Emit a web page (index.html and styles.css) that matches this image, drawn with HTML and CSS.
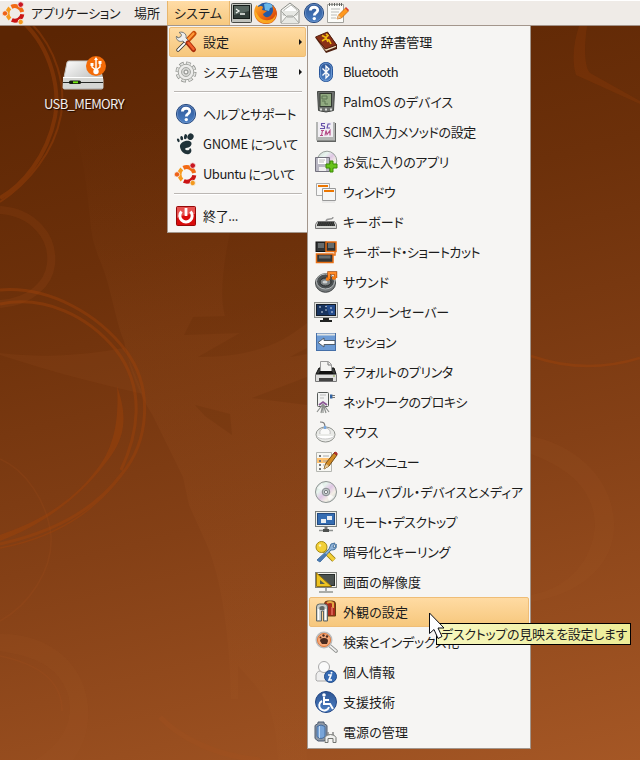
FILE: index.html
```
<!DOCTYPE html>
<html lang="ja">
<head>
<meta charset="utf-8">
<title>デスクトップ</title>
<link rel="stylesheet" href="styles.css">
</head>
<body>
<svg class="sprite" aria-hidden="true">
  <defs>
    <linearGradient id="blue" x2="0" y2="1"><stop stop-color="#2d5594"/><stop offset="1" stop-color="#4c80c4"/></linearGradient>
    <linearGradient id="metal" x2="1" y2="1"><stop stop-color="#fff"/><stop offset="1" stop-color="#a9aaa8"/></linearGradient>
    <linearGradient id="disc" x2="1" y2="1"><stop stop-color="#c9cfcf"/><stop offset=".3" stop-color="#e8f5ee"/><stop offset=".5" stop-color="#dfc7e4"/><stop offset=".7" stop-color="#f4efe6"/><stop offset="1" stop-color="#b7c3c7"/></linearGradient>
    <linearGradient id="fox" x2="1" y2="1"><stop stop-color="#ffb02b"/><stop offset=".5" stop-color="#ed6a11"/><stop offset="1" stop-color="#c92b08"/></linearGradient>
    <linearGradient id="stem" x2="0" y2="1"><stop stop-color="#a65a26" stop-opacity="0"/><stop offset=".35" stop-color="#a65a26"/></linearGradient>
    <symbol id="ubuntu" viewBox="0 0 24 24">
      <g fill="none" stroke-width="4">
        <path stroke="#f26a14" d="M9.4 5.900A7.600 7.600 0 0 1 20.200 11"/>
        <path stroke="#cb1414" d="M20.300 13.200A7.600 7.600 0 0 1 9.800 19"/>
        <path stroke="#f79a1c" d="M8 18A7.600 7.600 0 0 1 7.800 6.900"/>
      </g>
      <g stroke="#f5f2ef" stroke-width=".8"><circle cx="3" cy="12.400" r="2.700" fill="#ee6218"/><circle cx="18.700" cy="3.600" r="2.800" fill="#c91622"/><circle cx="18.700" cy="21" r="2.700" fill="#f39a1e"/></g>
    </symbol>
    <symbol id="help" viewBox="0 0 24 24">
      <circle cx="12" cy="12" r="9.600" fill="url(#blue)" stroke="#26497f"/>
      <circle cx="12" cy="12" r="8.700" fill="none" stroke="#7c9fd2" stroke-width=".6"/>
      <path d="M8.400 9.500c0-4.400 7.300-4.200 7.300-.3 0 2.900-3.400 2.500-3.400 5.300" fill="none" stroke="#fff" stroke-width="2.800"/><circle cx="12.300" cy="17.600" r="1.700" fill="#fff"/>
    </symbol>
  </defs>
</svg>

<main class="desktop">
  <svg class="wallpaper" viewBox="0 0 640 760" aria-hidden="true">
    <path fill="url(#stem)" opacity=".13" d="M69 118C88 160 87 205 93 240L98 256C110 280 115 320 124 341C130 372 140 395 153 416L183 477L189 505L207 545C222 580 230 640 231 699H238V666C262 692 276 704 278 760H307V545L245 563C265 600 275 643 307 644V120Z"/>
    <g fill="#a65a26" opacity=".12">
      <path d="M0 353C50 359 88 354 124 348L143 394C90 382 50 371 0 355Z"/>
      <path d="M0 634C50 633 84 665 88 705C90 730 82 748 73 760H35C60 745 75 725 68 694C58 666 36 657 0 651Z"/>
      <path d="M531 436C578 446 612 480 614 522C616 565 580 594 531 602V595C571 587 592 560 595 526C594 483 561 466 531 454Z"/>
    </g>
    <g fill="#542300" opacity=".14">
      <path d="M230 233C222 270 220 300 225 316L193 317L184 335L240 333L198 357C250 357 280 345 307 323V233Z"/>
      <path d="M195 405L230 414L232 435L205 416ZM307 348L290 357L307 354ZM307 377L252 398L307 405Z"/>
    </g>
    <g fill="none" stroke="#b2551f" opacity=".14">
      <path d="M0 210C32 212 54 236 51 264C49 284 30 302 0 304" stroke-width="8"/>
      <path d="M0 459C25 470 47 500 51 536C53 570 29 605 0 621M0 656C38 664 62 680 62 711" stroke-width="1.500"/>
      <path d="M160 717C180 738 216 756 260 760" stroke-width="5"/>
    </g>
    <g fill="none" stroke="#a34309" opacity=".4">
      <path d="M24 23C52 50 60 90 55 117C47 157 22 186 0 198" stroke-width="4"/>
      <path d="M31 23C57 50 66 85 61 115C54 153 28 183 0 202" stroke-width="2"/>
      <path d="M0 304C45 295 88 316 116 350C147 390 137 436 121 470M0 290C50 286 99 315 126 351C153 387 150 441 121 475C91 515 45 534 0 544" stroke-width="3"/>
      <path d="M0 548C64 536 106 503 130 462" stroke-width="1.400"/>
      <path d="M531 356Q585 375 640 358" stroke-width="2.500"/>
    </g>
    <g fill="#a34309" opacity=".42">
      <path d="M117 386C128 418 126 439 104 465C77 500 40 526 0 541V535C44 520 77 498 100 465C116 443 119 413 117 386Z"/>
      <path d="M579 26C573 45 572 62 576 75L640 104V101L590 73C584 66 584 46 587 26Z" opacity=".5"/>
    </g>
  </svg>

  <header class="panel">
    <nav class="menubar">
      <div class="menubar-item applications"><svg class="logo"><use href="#ubuntu"/></svg><span class="label" data-width="89">アプリケーション</span></div>
      <div class="menubar-item"><span class="label" data-width="26">場所</span></div>
      <div class="menubar-item open"><span class="label" data-width="48">システム</span></div>
    </nav>
    <div class="launchers">
      <svg viewBox="0 0 24 24"><rect x="1.500" y="2.500" width="20" height="19" rx="1" fill="#bfc1bc" stroke="#464845"/><rect x="3.500" y="4.500" width="16" height="13" fill="#303b38" stroke="#151b19"/><path d="M4 5h15v5L4 14z" fill="#56645f"/><path d="m6 8 3 2-3 2M10 13h5" fill="none" stroke="#f4f7f4" stroke-width="1.300"/></svg>
      <svg viewBox="0 0 24 24"><circle cx="12" cy="12" r="10.500" fill="#245aa5"/><path d="M10 3c4-2 8 0 9 3l-3 1-1 3-4-1z" fill="#68b7e9"/><path d="M2.500 4 4.500 6Q7 4 9 6L8 9l5 1-4 3c1 4 6 4 8 1 3-3 2-7 1-10 9 6 5 19-6 19C2 23-3 12 2.500 4Z" fill="url(#fox)"/><path d="M1.300 10C0 17 6 23 13 22.500c6 0 9-5 9-9.500-2 5-6 7-11 6-4 0-7-4-9.700-9Z" fill="#ffbd26" opacity=".8"/></svg>
      <svg viewBox="0 0 24 24"><path d="m3 9 9-7 9 7v13H3Z" fill="#f6f6f3" stroke="#8c8e89"/><path d="m6 9 7-5 6 5v5H5Z" fill="#fff" stroke="#b8b9b5"/><path d="m3 10 6 6h6l6-6M3 22l6-7h6l6 7" fill="#e7e8e4" stroke="#a6a8a3"/></svg>
      <svg viewBox="0 0 24 24"><use href="#help"/></svg>
      <svg viewBox="0 0 24 24"><path d="M1.500 3.500h16v18h-16Z" fill="#fcfcf9" stroke="#a3a39e"/><path d="M3.500 2v3M6 2v3M8.500 2v3m2.500-3v3M13.500 2v3m2-3v3" stroke="#60625e"/><path d="M5 8h9M5 11h8M5 14h6m-6 3h5" stroke="#bbbcb8"/><path d="m11 18 1.500-4 7-7 3 3-7 7Z" fill="#ff981e" stroke="#c4610a" stroke-width=".7"/><path d="m19 7 1-1 3 3-1 1Z" fill="#d8372f"/><path d="m11 18 1.500-4 2.500 2.500Z" fill="#e9c494"/></svg>
    </div>
  </header>

  <section class="drive">
    <svg viewBox="0 0 46 40"><path d="M3.500 25 7 7.500q.4-1.500 2-1.500h28q1.500 0 2 1.500L43 25v7.500q0 1.500-1.500 1.500h-37Q3 34 3 32.500Z" fill="url(#metal)" stroke="#c6c5c2"/><path d="M3 23h40v10H3Z" fill="#d6d7d4"/><path d="M3 22.500h40" stroke="#fff"/><path d="M3 27.500h40" stroke="#272a27"/><rect x="9" y="25.500" width="12" height="3.500" rx="1.500" fill="#151b10"/><path d="M13 27.300h5" stroke="#75eb16" stroke-width="1.800"/><circle cx="36" cy="11" r="10" fill="#f36b08"/><g fill="none" stroke="#fff" stroke-width="1.400"><path d="M36 4v12M32 9v3l4 3 4-3V8"/></g><path d="m36 2-2 3h4ZM30.500 8h3v3h-3ZM38.500 6h3v3h-3Z" fill="#fff"/><circle cx="36" cy="16.500" r="2.700" fill="#fff"/></svg>
    <span class="label" data-width="80">USB_MEMORY</span>
  </section>

  <nav class="menu system-menu">
    <div class="item selected"><svg viewBox="0 0 24 24"><path d="m4 20 9-9" stroke="#333" stroke-width="3.500" stroke-linecap="round"/><path d="m4 20 9-9" stroke="#fff" stroke-width="1.800" stroke-linecap="round"/><path d="m13 11 7-7.500" stroke="#c94d07" stroke-width="5" stroke-linecap="round"/><path d="m13.500 10 6-6.500" stroke="#ff9a38" stroke-width="2.200" stroke-linecap="round"/><path d="M5 2.500c2 1 3 2 2 4L4 8 2.500 6c-1 4 3 6.500 6.500 5l4 4 3-3-4-4c1-4-3-7-7-5.500Z" fill="#eee" stroke="#747672"/><path d="m14 13 5.500 6.500" stroke="#a92d0b" stroke-width="5" stroke-linecap="round"/><path d="m14.500 13 5 6" stroke="#f2602a" stroke-width="2.500" stroke-linecap="round"/></svg><span class="label" data-width="26">設定</span><i class="arrow"></i></div>
    <div class="item"><svg viewBox="0 0 24 24"><circle cx="12" cy="12" r="9" fill="none" stroke="#8d8f8b" stroke-width="3" stroke-dasharray="4.500 2.570"/><circle cx="12" cy="12" r="7.800" fill="#ececea" stroke="#a0a29d"/><circle cx="12" cy="12" r="8.900" fill="none" stroke="#e2e3e0" stroke-width="1.800" stroke-dasharray="3.300 3.700" stroke-dashoffset="-.600"/><circle cx="12" cy="12" r="4.500" fill="#d5d6d3" stroke="#a7a9a5"/><circle cx="12" cy="12" r="2" fill="#f6f5f3" stroke="#868885"/></svg><span class="label" data-width="75">システム管理</span><i class="arrow"></i></div>
    <hr>
    <div class="item"><svg viewBox="0 0 24 24"><use href="#help"/></svg><span class="label" data-width="93">ヘルプとサポート</span></div>
    <div class="item"><svg viewBox="0 0 24 24"><g fill="#203238"><ellipse cx="16.500" cy="4.700" rx="3" ry="3.300" transform="rotate(35 16.500 4.700)"/><ellipse cx="11.500" cy="4.700" rx="1.500" ry="2.600" transform="rotate(12 11.500 4.700)"/><ellipse cx="7.700" cy="6.100" rx="1.400" ry="2.200" transform="rotate(-12 7.700 6.100)"/><ellipse cx="4.300" cy="8.300" rx="1.200" ry="1.900" transform="rotate(-25 4.300 8.300)"/><path d="M17 10c-3-3-12 0-11 5 1 5 5 8 9 7 3-1 3-5 1-6l-1 2c-3 1-5-1-3-2 3 0 7-3 5-6Z"/></g></svg><span class="label" data-width="95">GNOME について</span></div>
    <div class="item"><svg viewBox="0 0 24 24"><use href="#ubuntu"/></svg><span class="label" data-width="92">Ubuntu について</span></div>
    <hr>
    <div class="item"><svg viewBox="0 0 24 24"><rect x="2.500" y="2.500" width="19" height="19" rx="1" fill="#d90c0c" stroke="#950909"/><path d="M3 3h18v7Q10 10 3 14Z" fill="#f28380" opacity=".6"/><path d="M7.500 7.500a6.200 6.200 0 1 0 9 0" fill="none" stroke="#fff" stroke-width="3"/><path d="M12 4v8" stroke="#fff" stroke-width="2.800"/></svg><span class="label" data-width="35">終了...</span></div>
  </nav>

  <nav class="menu preferences-menu">
    <div class="item"><svg viewBox="0 0 24 24"><path d="m1.500 8 12-6L23 15v4l-11 4Z" fill="#4d200f"/><path d="m3 11 9 10 10-4v-2l-11 4Z" fill="#f1dfbf"/><path d="m1.500 7 12-5 9 13-11 4Z" fill="#8a3017" stroke="#54200f"/><path d="m8 5.500 4 2 2-2-2-1.500m0 4 2 4m-6-1 3-2 4 1 2 4" fill="none" stroke="#f1bd15" stroke-width="1.600"/></svg><span class="label" data-width="89">Anthy 辞書管理</span></div>
    <div class="item"><svg viewBox="0 0 24 24"><rect x="5.500" y="2.500" width="13" height="19" rx="6" fill="url(#blue)" stroke="#28569b"/><rect x="6.500" y="3.500" width="11" height="17" rx="5" fill="none" stroke="#7cabe1" stroke-width=".7"/><path d="m8.500 8.500 6.500 6.500-3 3V6l3 3-6.500 6.500" fill="none" stroke="#fff" stroke-width="1.300"/></svg><span class="label" data-width="55">Bluetooth</span></div>
    <div class="item"><svg viewBox="0 0 24 24"><path d="M3.500 1.500h17l-1 19q-7.500 3-15 0Z" fill="#6f726f" stroke="#444744"/><rect x="6" y="3.500" width="11.500" height="13" fill="#91aa80" stroke="#343a32"/><path d="M8 6h5v3H8zm0 5h3v3h3" fill="none" stroke="#5d7553"/><path d="M6 19.500h2m3 0h2m3 0h2" stroke="#d6d8d5" stroke-width="2"/></svg><span class="label" data-width="110">PalmOS のデバイス</span></div>
    <div class="item"><svg viewBox="0 0 24 24"><rect x="3" y="3" width="19" height="19" fill="#626462"/><rect x="2" y="2" width="19" height="18.500" fill="#b4b6b4"/><rect x="4" y="2" width="15" height="15" fill="#f1eff4"/><g fill="none" stroke-width="1.100"><path stroke="#6651a9" d="M11 3.500H7.500v2l3 1v2H6M16.500 4H14l-1 4h3"/><path stroke="#b54884" d="M7 10.500h3m-1.500 0-1 5m-1.500 0h3m2 0 1-5 1 4 3-4v5"/></g></svg><span class="label" data-width="133">SCIM入力メソッドの設定</span></div>
    <div class="item"><svg viewBox="0 0 24 24"><circle cx="13" cy="11" r="9.800" fill="url(#disc)" stroke="#9aa29d"/><path d="M1.500 7.500h14v14h-14Z" fill="#b9b7c3" stroke="#72707c"/><path d="M4 8h8v6H4Z" fill="#fff"/><path d="M5 10h6m-6 2h5" stroke="#bbb"/><path d="M5 17h7v4H5Z" fill="#eee"/><path d="M12 14h4v-3h3v3h4v4h-4v4h-3v-4h-4Z" fill="#67c319" stroke="#3c8b06"/></svg><span class="label" data-width="106">お気に入りのアプリ</span></div>
    <div class="item"><svg viewBox="0 0 24 24"><path d="M2.500 3.500h13v12h-13Z" fill="#f7f7f6" stroke="#aaa"/><path d="M4 6h10" stroke="#ec7600" stroke-width="2"/><path d="M8.500 8.500h13v12h-13Z" fill="#f5f5f4" stroke="#999"/><path d="M10 11h10" stroke="#ec7600" stroke-width="2"/><path d="M8 22h13" stroke="#ddd"/></svg><span class="label" data-width="52">ウィンドウ</span></div>
    <div class="item"><svg viewBox="0 0 24 24"><path d="M12 11c1-4 7 0 7-4" fill="none" stroke="#999" stroke-width="1.300"/><path d="M3.500 11.500h17l2 3v4h-21v-4Z" fill="#d4d5d2" stroke="#777"/><path d="M4 12h16l1 4H3Z" fill="#4e504e"/><path d="M4 13h16M3 15h18" stroke="#111" stroke-dasharray="1.500 .6"/></svg><span class="label" data-width="61">キーボード</span></div>
    <div class="item"><svg viewBox="0 0 24 24"><rect x="2" y="2" width="10" height="9.500" fill="#303334" stroke="#111"/><rect x="12" y="2" width="10" height="9.500" fill="#303334" stroke="#e76e13" stroke-width="1.500"/><rect x="2.500" y="14" width="16.500" height="8.500" fill="#343738" stroke="#e76e13" stroke-width="1.500"/><path d="M4 3h6v5H4Zm10 0h6v5h-6ZM5 15.500h11.500v3H5Z" fill="#666b6c"/><path d="M21 12v3h-2" fill="none" stroke="#e76e13" stroke-width="1.500"/></svg><span class="label" data-width="137">キーボード・ショートカット</span></div>
    <div class="item"><svg viewBox="0 0 24 24"><ellipse cx="11.500" cy="13" rx="10" ry="9.300" fill="#767a7b" stroke="#424647"/><ellipse cx="11.500" cy="11.500" rx="9" ry="7.500" fill="#4b5052" stroke="#b7bbbc"/><ellipse cx="11.500" cy="12" rx="5.500" ry="4" fill="#7c8182" stroke="#252829"/><ellipse cx="11" cy="12" rx="2.500" ry="1.500" fill="#ccd0d0"/><path d="M15 9V3h6.500v5" fill="none" stroke="#a74705" stroke-width="3.400"/><path d="M15 9V3h6.500v5" fill="none" stroke="#ff8a27" stroke-width="2"/><path d="M12 9h3.500m2.500-1h4" stroke="#f57910" stroke-width="3"/></svg><span class="label" data-width="46">サウンド</span></div>
    <div class="item"><svg viewBox="0 0 24 24"><rect x=".500" y="2.500" width="23" height="15" fill="#e1e2e0" stroke="#8d8f8c"/><rect x="2.500" y="4.500" width="19" height="11" fill="#18345f" stroke="#151d28"/><path d="M12 5h9v10h-6Z" fill="#234b8c"/><g fill="#eef6ff"><circle cx="6" cy="7" r=".8"/><circle cx="12" cy="6.500" r=".7"/><circle cx="17" cy="8" r=".8"/><circle cx="8" cy="12" r=".8"/><circle cx="12" cy="10" r=".7"/><circle cx="18" cy="12" r=".8"/></g><path d="M9 18h6v2h3v2H6v-2h3Z" fill="#202221"/></svg><span class="label" data-width="106">スクリーンセーバー</span></div>
    <div class="item"><svg viewBox="0 0 24 24"><rect x="2.500" y="3.500" width="19" height="17" fill="#6d9bd4" stroke="#456fa8"/><path d="M3 4.500h18" stroke="#dde2e5" stroke-width="2"/><path d="m4 12.500 6-4.500v2.500h11v4H10V17Z" fill="#fff" stroke="#525d69"/></svg><span class="label" data-width="53">セッション</span></div>
    <div class="item"><svg viewBox="0 0 24 24"><path d="M5 8h15l2 6H2Z" fill="#3b3d3c" stroke="#111"/><path d="M6.500 13V1.500h8l3 3V13" fill="#f4f4f2" stroke="#999"/><path d="M14 2v3h3" fill="none" stroke="#777"/><path d="M6 11h12l2 4H4Z" fill="#111"/><path d="M1.500 14.500h21v7h-21Z" fill="#dddddc" stroke="#777"/><path d="M5 18h14v3H5Z" fill="#444"/><path d="M19 16h2" stroke="#8ca84c"/></svg><span class="label" data-width="110">デフォルトのプリンタ</span></div>
    <div class="item"><svg viewBox="0 0 24 24"><rect x="3.500" y="2.500" width="11" height="14" rx="1" fill="#f1f2f1" stroke="#555a57"/><path d="M6 5h6m-6 3h4" stroke="#bbb"/><path d="M16 4.500h2.500v4H16Z" fill="#3264a2"/><path d="M18 5.500h3m-3 2h3" stroke="#777"/><path d="M9 14 3 22m6-8-2 9m2-9v9m0-9 6 8m-6-8 3 9" fill="none" stroke="#8e918e" stroke-width="1.200"/><path d="m5 15 4-3 4 3" fill="none" stroke="#8b5995" stroke-width="1.800"/></svg><span class="label" data-width="124">ネットワークのプロキシ</span></div>
    <div class="item"><svg viewBox="0 0 24 24"><path d="M6 2c4 0 5 1 5 6" fill="none" stroke="#777" stroke-width="1.200"/><ellipse cx="11.500" cy="14.500" rx="9.500" ry="7.500" fill="#e9eae7" stroke="#90938e"/><path d="M2.500 16c3 4 14 4 18 0" fill="#fff" stroke="#ccc"/><path d="M6 14c-1-4 2-6 5-6s6 2 5 6" fill="#fafaf9" stroke="#bbb"/><path d="M11 6v3" stroke="#78a8df" stroke-width="2.500"/></svg><span class="label" data-width="36">マウス</span></div>
    <div class="item"><svg viewBox="0 0 24 24"><path d="M2.500 2.500h15v19h-15Z" fill="#f7f7f3" stroke="#b4b6b1"/><path d="M3 8h14v5H3Z" fill="#ffc270"/><path d="M5 6h2m-2 5h2m-2 4h2m-2 4h2" stroke="#777" stroke-width="2"/><path d="M9 6h6m-6 5h6m-6 4h3" stroke="#aaa"/><path d="m10 19 2-6 8-10 3 2-8 11Z" fill="#d28b25" stroke="#714b15"/><path d="m20 3 1-1 2 1v2Z" fill="#cb3b37" stroke="#a12925"/><path d="m10 19 2-5 3 2Z" fill="#e8ca98"/></svg><span class="label" data-width="76">メインメニュー</span></div>
    <div class="item"><svg viewBox="0 0 24 24"><circle cx="12" cy="12" r="10.500" fill="url(#disc)" stroke="#8e9593"/><path d="M12 12 3 8l5-5Z" fill="#fff" opacity=".6"/><path d="m12 12 8 5-5 4Z" fill="#fff" opacity=".7"/><circle cx="12" cy="12" r="3.800" fill="#bec4c6" stroke="#858b8d"/><circle cx="12" cy="12" r="1.600" fill="#fff" stroke="#767b7e"/></svg><span class="label" data-width="180">リムーバブル・デバイスとメディア</span></div>
    <div class="item"><svg viewBox="0 0 24 24"><rect x="1.500" y="1.500" width="21" height="15" fill="#eeefea" stroke="#7b807f"/><rect x="3.500" y="3.500" width="17" height="11" fill="#356db2" stroke="#234a80"/><path d="M7 9h5v4H7ZM13 6h5v4h-5Z" fill="#e7edf3"/><path d="M12 17v4" stroke="#777" stroke-width="3"/><path d="M5 20.500h14" stroke="#8d908e" stroke-width="1.500"/><path d="M9 20.500h6" stroke="#4d504e" stroke-width="3"/></svg><span class="label" data-width="114">リモート・デスクトップ</span></div>
    <div class="item"><svg viewBox="0 0 24 24"><path d="m7 7 13 13" stroke="#967d10" stroke-width="5"/><path d="m7 7 13 13" stroke="#f4cf36" stroke-width="3.400"/><circle cx="7.500" cy="7" r="5.500" fill="#f2cf36" stroke="#a48914"/><circle cx="6" cy="5.500" r="1.200" fill="#fff6b4"/><path d="m3 20 12-11 2-5 4-1-2 4 2 1 1-4c1 4 0 6-5 6L6 22Z" fill="#8fb2d8" stroke="#47749f"/><path d="m3 20 8-7 2 2-7 7Z" fill="#4c7bb2"/></svg><span class="label" data-width="107">暗号化とキーリング</span></div>
    <div class="item"><svg viewBox="0 0 24 24"><rect x="1.500" y="2.500" width="21" height="15" fill="#f1f1ed" stroke="#80827e"/><rect x="3.500" y="4.500" width="17" height="11" fill="#4b5250" stroke="#282d2a"/><path d="M2.500 3v13.500h15Z" fill="#edc322" stroke="#967510"/><path d="M6 10v4h5Z" fill="#58614f"/><path d="M12 18v3m-7 1h14" stroke="#aaaca8" stroke-width="2"/></svg><span class="label" data-width="78">画面の解像度</span></div>
    <div class="item selected"><svg viewBox="0 0 24 24"><path d="M10.500 4q0-3 3-3h5q3 0 3 3v12h-9Z" fill="#a92b1d" stroke="#63410e"/><path d="M13 3q3-2 6 0v5" fill="none" stroke="#e2a944" stroke-width="2"/><path d="M18 7v8" stroke="#e46f5e" stroke-width="1.500"/><path d="M2.500 7q0-3 3-3h5q3 0 3 3v14h-4v-10h-2v10h-5Z" fill="#c7ccca" stroke="#5e6562"/><path d="M5.500 7q3-2 5 0v3h-5Z" fill="#606765"/><path d="M4.500 9v11m7-11v11" stroke="#fff" stroke-width="1.500"/></svg><span class="label" data-width="65">外観の設定</span></div>
    <div class="item"><svg viewBox="0 0 24 24"><path d="m15 15 7 6" stroke="#858783" stroke-width="3.500" stroke-linecap="round"/><path d="m15 15 7 6" stroke="#eee" stroke-width="1.800" stroke-linecap="round"/><circle cx="10" cy="10" r="7.500" fill="#f8ac7c" stroke="#bbb" stroke-width="2"/><circle cx="10" cy="10" r="6.500" fill="none" stroke="#e57736"/><path d="M6 11q0-3 4-3t4 3l-1 3H8Z" fill="#4b2b20"/><g fill="#4b2b20"><circle cx="6.500" cy="7.500" r="1"/><circle cx="9.500" cy="5.500" r="1.200"/><circle cx="13" cy="6.500" r="1.200"/></g></svg><span class="label" data-width="116">検索とインデックス化</span></div>
    <div class="item"><svg viewBox="0 0 24 24"><path d="M2 20v-5q1-5 7-4h4q5 0 5 5v5H3Z" fill="#eee" stroke="#aaa"/><circle cx="10" cy="7" r="5.500" fill="#fafafa" stroke="#aaa"/><circle cx="16.500" cy="16.500" r="6" fill="#366bb4" stroke="#214b89"/><path d="M14 15h3l-2 5h3" fill="none" stroke="#fff" stroke-width="1.700"/><circle cx="17.500" cy="12.800" r="1" fill="#fff"/></svg><span class="label" data-width="52">個人情報</span></div>
    <div class="item"><svg viewBox="0 0 24 24"><circle cx="12" cy="12" r="10.500" fill="url(#blue)" stroke="#244784"/><circle cx="10" cy="5" r="1.800" fill="#fff"/><path d="M10 7v7h6l3 5M10 10h5M8 11a5 5 0 1 0 7 6" fill="none" stroke="#fff" stroke-width="2"/></svg><span class="label" data-width="52">支援技術</span></div>
    <div class="item"><svg viewBox="0 0 24 24"><path d="M4 3.500V2h6v1.500l3 2v13l-3 2.500H4l-3-2.500v-13Z" fill="#8f98a4" stroke="#4c5b70"/><path d="M3 6.500q4-3 8 0v10q-4 4-8 0Z" fill="#78a4d8" stroke="#456c9f"/><path d="M5.500 6v12" stroke="#c2d8f0"/><path d="M14 15v-3m5 3v-3" stroke="#888" stroke-width="1.500"/><path d="M11 22.500v-5q1-3 5.500-3t5.500 3v5h-3v-4h-5v4Z" fill="#f0f0ee" stroke="#737571"/></svg><span class="label" data-width="65">電源の管理</span></div>
  </nav>
  <div class="tooltip"><span class="label" data-width="186">デスクトップの見映えを設定します</span></div>
  <svg class="cursor" viewBox="0 0 18 28"><path d="M.500 1v20.500l4.500-4 4 9 4-2-4-8.500h6Z" fill="#fff" stroke="#0b0e15" stroke-linejoin="round"/></svg>
</main>
<script src="labels.js"></script>
</body>
</html>
```
FILE: styles.css
```
* { box-sizing: border-box; }
body { margin: 0; font: 13px/20px "Noto Sans CJK JP", "Noto Sans", sans-serif; color: #1c1c1c; }
svg { display: block; flex: none; }
.sprite { position: absolute; width: 0; height: 0; }
.desktop { position: relative; width: 640px; height: 760px; overflow: hidden; background: linear-gradient(166deg, #5b2503 5%, #6c300a 32%, #844016 63%, #a55725 100%); }
.wallpaper { position: absolute; inset: 0; width: 640px; height: 760px; }
.label { white-space: nowrap; font-feature-settings: "palt"; }
.panel { position: relative; height: 26px; display: flex; background: #efebe7; border-top: 1px solid #fff; border-bottom: 1px solid #a49389; }
.menubar { display: flex; }
.menubar-item { display: flex; align-items: center; padding: 0 7px; }
.applications { width: 127px; padding-left: 2px; gap: 5px; }
.logo { width: 24px; height: 24px; }
.open { width: 63px; background: linear-gradient(#ffdca6, #f7c980); border: solid #e8b66c; border-width: 0 1px; padding: 0 6px; }
.launchers { display: flex; align-items: center; }
.launchers svg { width: 24px; height: 24px; }
.drive { position: absolute; top: 55px; left: 34px; width: 100px; display: flex; flex-direction: column; align-items: center; color: #f1eeec; text-shadow: 1px 1px 1px #160800; }
.drive svg { width: 46px; height: 40px; margin: 0 2px 0 0; }
.drive .label { margin-top: -1px; }
.menu { position: absolute; top: 25px; background: #f6f5f3; border: 1px solid #a3968c; padding: 1px; }
.system-menu { left: 167px; width: 141px; }
.preferences-menu { left: 307px; width: 224px; }
.item { height: 30px; display: flex; align-items: center; gap: 5px; border: 1px solid transparent; border-radius: 2px; padding: 0 4px; }
.item svg { width: 24px; height: 24px; }
.selected { border-color: #efbd76; background: linear-gradient(#ffdba3, #f6c77c); }
.arrow { margin: 0 -1px 0 auto; border: solid transparent; border-width: 3px 0 3px 3px; border-left-color: #111; }
hr { height: 2px; margin: 4px 4px 6px 5px; border: 0; border-top: 1px solid #bbb7b3; background: #fff; }
.tooltip { position: absolute; left: 436px; top: 623px; width: 195px; height: 22px; padding: 0 4px; border: 1px solid #000; background: linear-gradient(110deg, #f7f7c0, #eded96); }
.cursor { position: absolute; left: 429px; top: 612px; width: 18px; height: 28px; }
```
FILE: labels.js
```
document.querySelectorAll('.label[data-width]').forEach(label => {
  const natural = label.getBoundingClientRect().width;
  const spacing = (Number(label.dataset.width) - natural) / label.textContent.length;
  label.style.letterSpacing = spacing + 'px';
});
```
